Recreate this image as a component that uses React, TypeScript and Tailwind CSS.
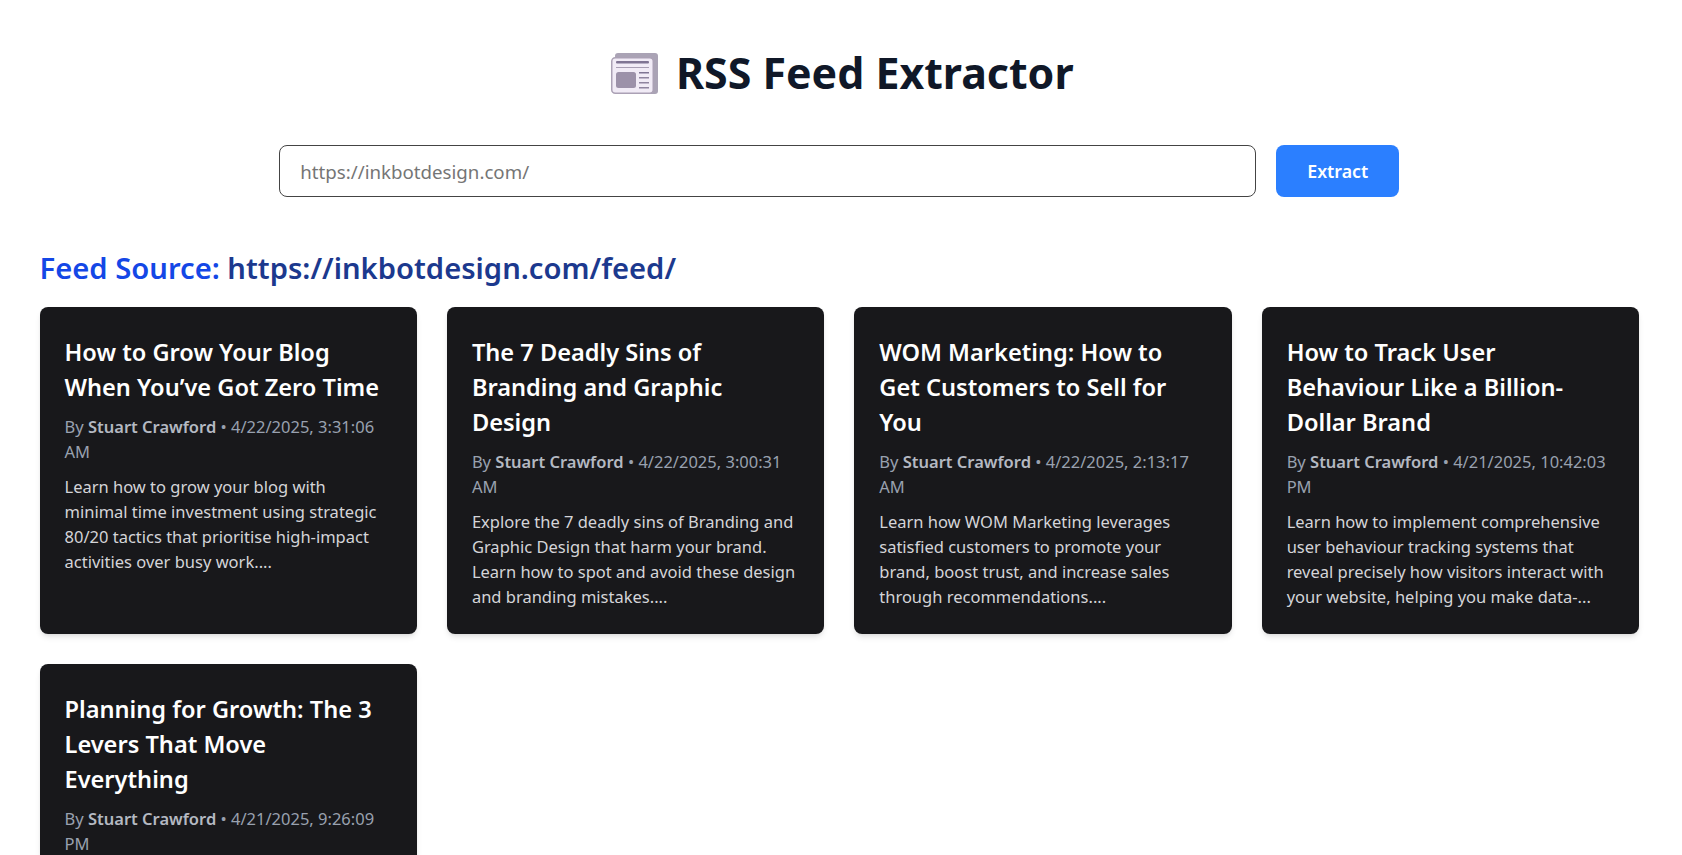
import React from "react";

const posts = [
  {
    title: "How to Grow Your Blog When You’ve Got Zero Time",
    date: "4/22/2025, 3:31:06 AM",
    text: "Learn how to grow your blog with minimal time investment using strategic 80/20 tactics that prioritise high-impact activities over busy work....",
  },
  {
    title: "The 7 Deadly Sins of Branding and Graphic Design",
    date: "4/22/2025, 3:00:31 AM",
    text: "Explore the 7 deadly sins of Branding and Graphic Design that harm your brand. Learn how to spot and avoid these design and branding mistakes....",
  },
  {
    title: "WOM Marketing: How to Get Customers to Sell for You",
    date: "4/22/2025, 2:13:17 AM",
    text: "Learn how WOM Marketing leverages satisfied customers to promote your brand, boost trust, and increase sales through recommendations....",
  },
  {
    title: "How to Track User Behaviour Like a Billion-Dollar Brand",
    date: "4/21/2025, 10:42:03 PM",
    text: "Learn how to implement comprehensive user behaviour tracking systems that reveal precisely how visitors interact with your website, helping you make data-...",
  },
  {
    title: "Planning for Growth: The 3 Levers That Move Everything",
    date: "4/21/2025, 9:26:09 PM",
    text: "Learn how three simple levers can move your whole business forward and keep your growth plans on track....",
  },
];

function NewspaperIcon() {
  return (
    <svg width="47" height="41" viewBox="0 0 47 41" className="shrink-0">
      <path d="M4 3 Q4 0 7 0 H44 Q47 0 47 3 V38 Q47 41 44 41 H6 Z" fill="#aaa3b5" />
      <rect x="0.75" y="4.75" width="41.5" height="35.5" rx="3.5" fill="#f1ebf6" stroke="#aba1b5" strokeWidth="1.5" />
      <rect x="5" y="8" width="33" height="2.5" rx="1" fill="#7f7493" />
      <rect x="5" y="14" width="33" height="1" fill="#a79db3" />
      <rect x="5" y="19" width="20" height="16" rx="2.5" fill="#9c91a9" />
      <rect x="28" y="19" width="10" height="1.5" fill="#7f7493" />
      <rect x="28" y="24" width="10" height="1.5" fill="#8f849f" />
      <rect x="28" y="29" width="10" height="1.5" fill="#8f849f" />
      <rect x="28" y="34" width="10" height="1.5" fill="#8f849f" />
    </svg>
  );
}

function PostCard({ title, date, text }: { title: string; date: string; text: string }) {
  return (
    <div className="bg-zinc-900 rounded-lg px-[25px] pt-6 pb-[25px] shadow-md">
      <h3 className="mt-[4px] mb-[9px] text-[23.6px] leading-[35px] font-semibold text-white">{title}</h3>
      <p className="text-[16.5px] leading-[25px] text-gray-400">
        By <strong className="font-semibold text-[#b4b9c2]">Stuart Crawford</strong> • {date}
      </p>
      <p className="mt-[9.5px] text-[16.5px] leading-[25px] text-zinc-300">{text}</p>
    </div>
  );
}

export default function App() {
  return (
    <div className="w-[1679px] min-h-screen bg-white pl-[39.5px] pr-10 pt-[40px] font-['Noto_Sans','Liberation_Sans',sans-serif]">
      <h1 className="flex items-center justify-center gap-[18px] pl-[6px] h-[66px] text-[42.9px] font-bold text-gray-900">
        <NewspaperIcon />
        RSS Feed Extractor
      </h1>
      <div className="mt-[39px] flex justify-center gap-5">
        <input
          placeholder="https://inkbotdesign.com/"
          className="w-[977px] h-[52px] px-5 border border-[#444] rounded-lg bg-white text-[18.7px] placeholder:text-[#757575] outline-none"
        />
        <button className="w-[123px] h-[52px] rounded-lg bg-blue-500 text-white text-[17.8px] font-semibold">Extract</button>
      </div>
      <h2 className="mt-[48px] mb-[16px] text-[29.2px] leading-[46px] font-semibold text-blue-700">
        Feed Source: <a className="text-blue-900">https://inkbotdesign.com/feed/</a>
      </h2>
      <div className="grid grid-cols-4 gap-[30px]">
        {posts.map((post) => (
          <PostCard key={post.title} {...post} />
        ))}
      </div>
    </div>
  );
}
